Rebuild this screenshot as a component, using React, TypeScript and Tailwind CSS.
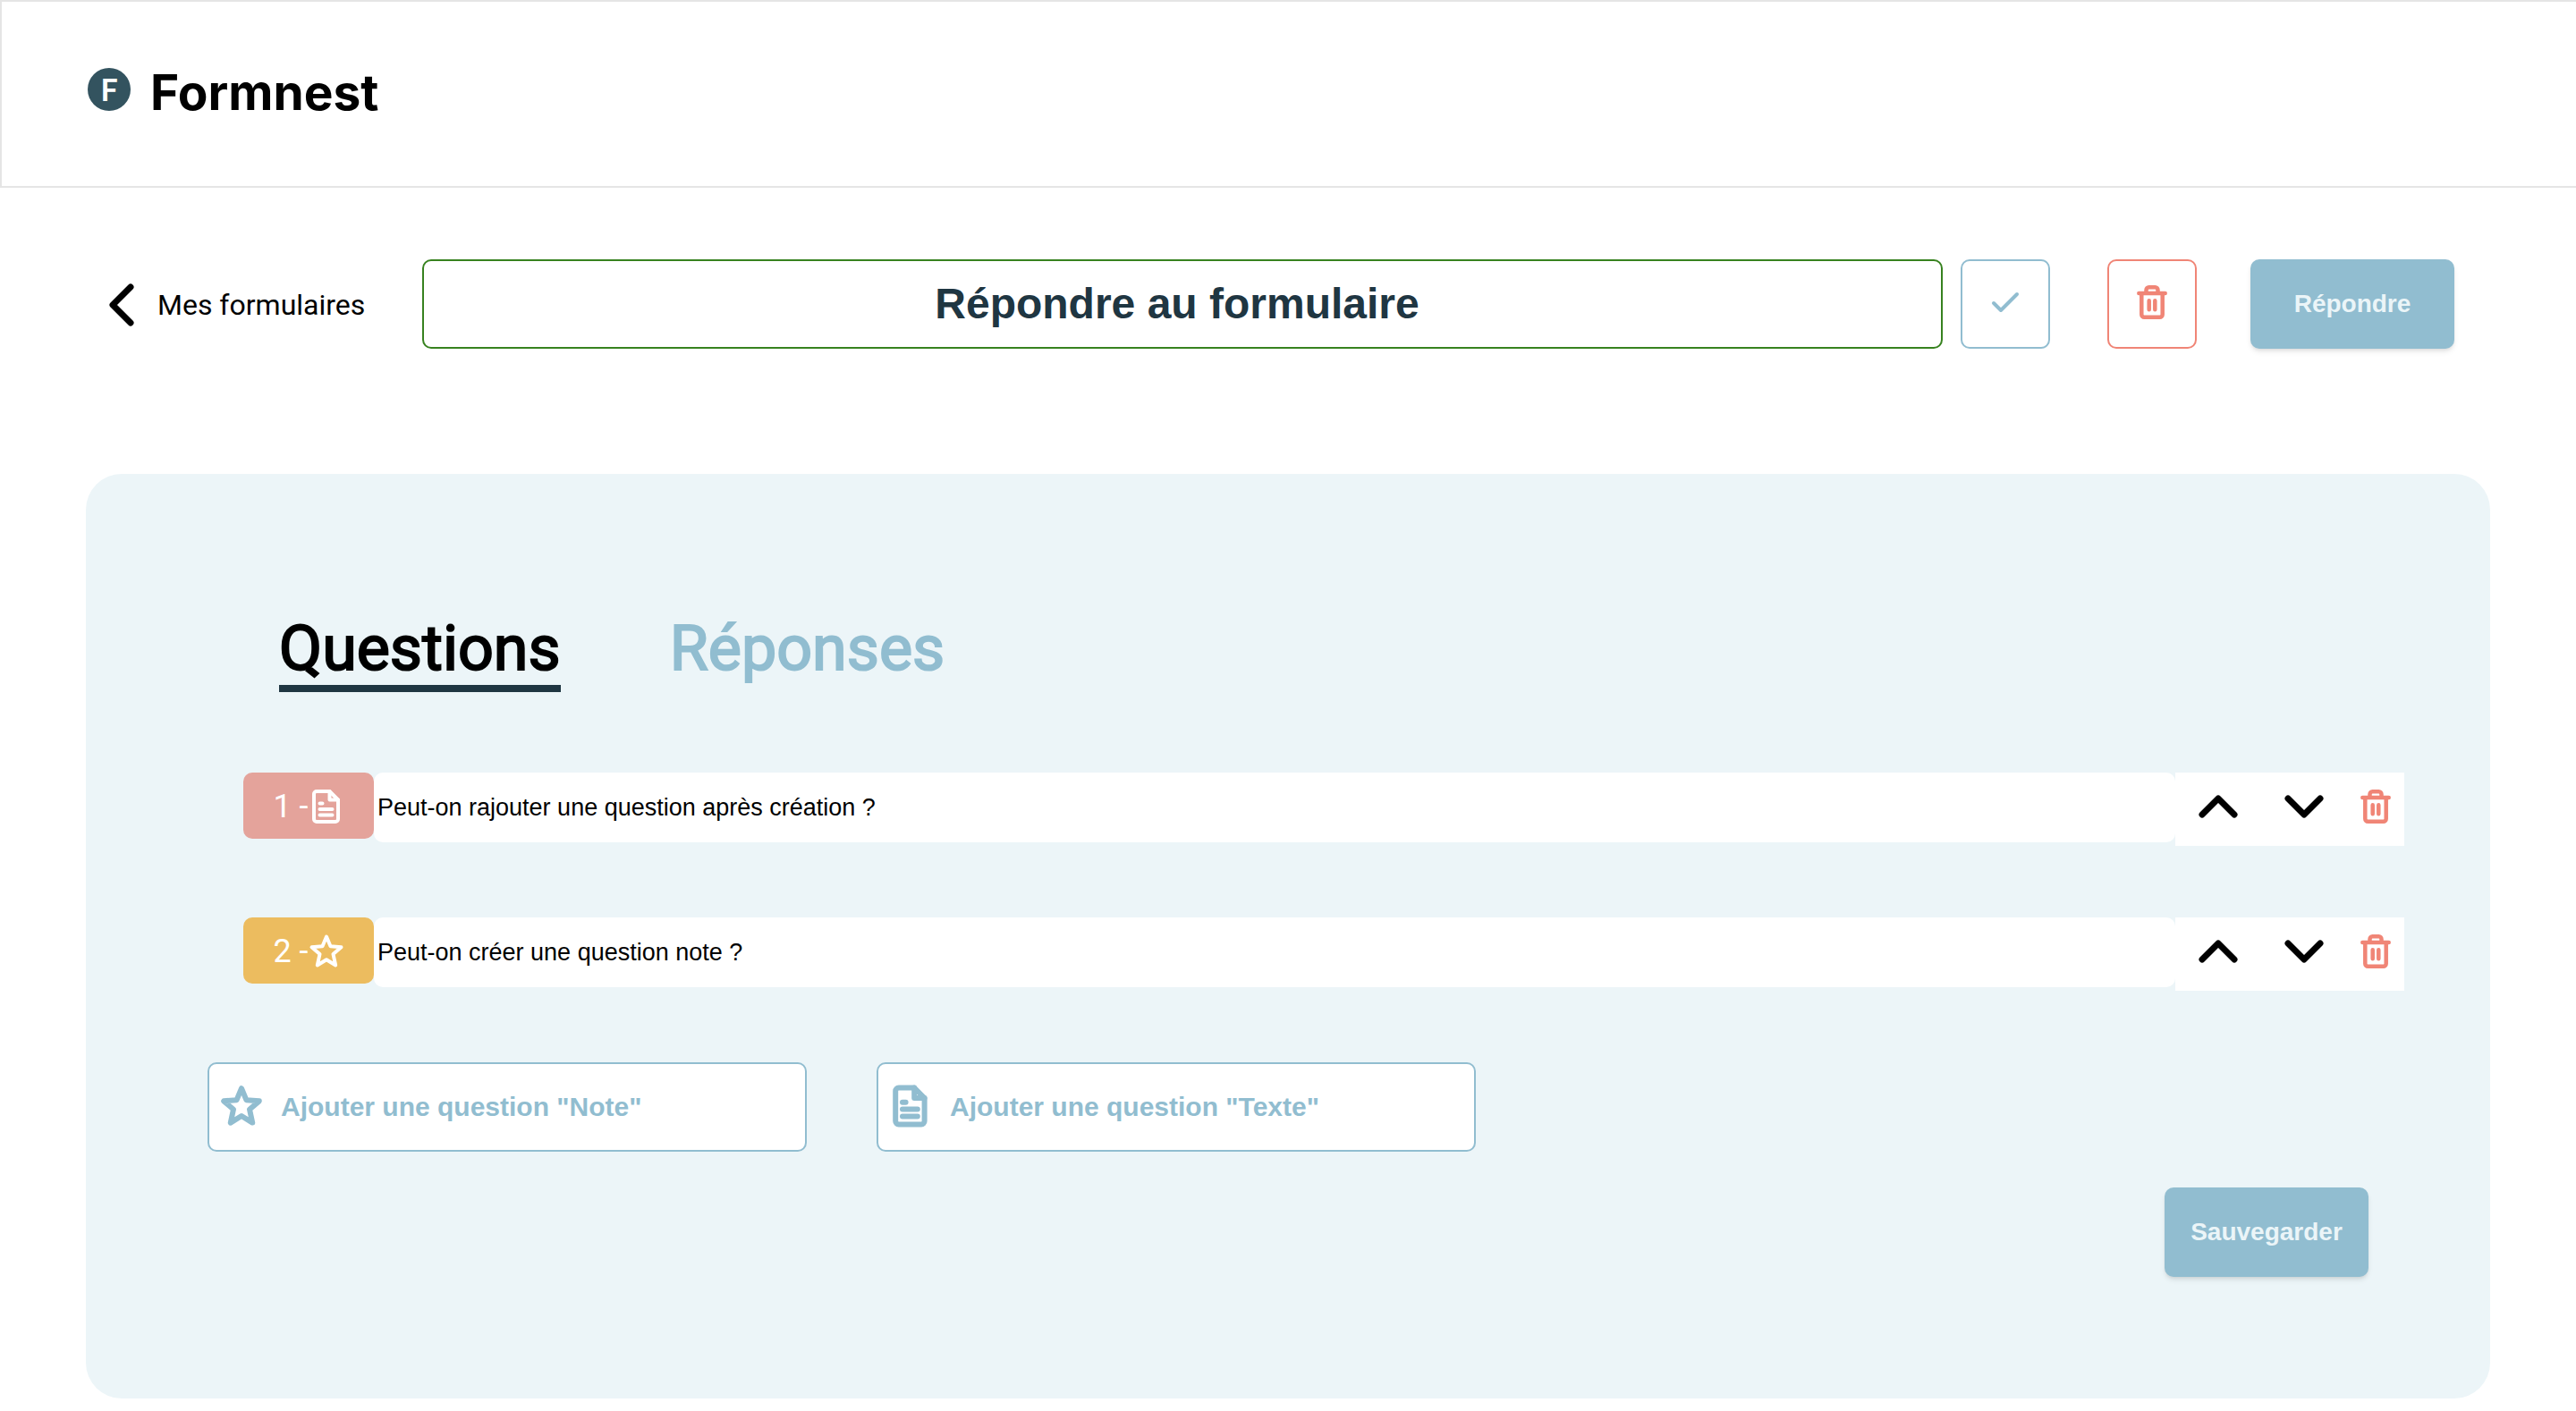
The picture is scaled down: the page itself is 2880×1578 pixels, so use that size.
import { useState } from 'react';

type Kind = 'text' | 'note';

const icon = 'shrink-0 fill-none [stroke-linecap:round] [stroke-linejoin:round]';

function DocIcon({ className }: { className: string }) {
  return (
    <svg viewBox="4 4 40 40" aria-hidden="true" className={`${icon} ${className}`} stroke="currentColor">
      <path d="M27.500 7H13a3 3 0 0 0-3 3v28a3 3 0 0 0 3 3h21a3 3 0 0 0 3-3V16.500z" />
      <path d="M27.500 7v9.500h9.500M16.500 20.500h3M16.500 27h14M16.500 33.500h14" />
    </svg>
  );
}

function StarIcon({ className }: { className: string }) {
  return (
    <svg viewBox="4 4 40 40" aria-hidden="true" className={`${icon} ${className}`} stroke="currentColor">
      <path d="M24 7.500l4.500 10.800 12 1-9 7.800L34.200 39.500 24 33.200 13.800 39.500l2.700-12.400-9-7.800 12-1z" />
    </svg>
  );
}

function TrashIcon() {
  return (
    <svg viewBox="0 0 34 38" aria-hidden="true" className={`${icon} h-[38px] w-[34px]`} stroke="currentColor" strokeWidth="4.5">
      <path d="M2.300 9h29.400M5.300 9v23.700a3 3 0 0 0 3 3h17.400a3 3 0 0 0 3-3V9M10.500 9V5.300a3 3 0 0 1 3-3h7a3 3 0 0 1 3 3v3.700M13.700 17.300v10M20.300 17.300v10" />
    </svg>
  );
}

function Chevron({ d }: { d: string }) {
  return (
    <svg viewBox="0 0 48 48" aria-hidden="true" className={`${icon} size-12`} stroke="currentColor" strokeWidth="7">
      <path d={d} />
    </svg>
  );
}

function QuestionRow({ index, kind, label }: { index: number; kind: Kind; label: string }) {
  const [value, setValue] = useState(label);
  return (
    <li className="flex items-start">
      <div
        className={`flex h-[74px] w-[146px] items-center justify-center rounded-[10px] pt-0.5 font-[Roboto] text-4xl text-white ${
          kind === 'text' ? 'bg-[#e4a39b]' : 'bg-[#ecbc5f]'
        }`}
      >
        <span>{index} -</span>
        {kind === 'text' ? <DocIcon className="size-10 stroke-4" /> : <StarIcon className="size-10 stroke-4" />}
      </div>
      <input
        aria-label={`Question ${index}`}
        value={value}
        onChange={(e) => setValue(e.target.value)}
        className="h-[78px] min-w-0 flex-1 rounded-[10px] bg-white px-1 text-[27px] text-black"
      />
      <div className="flex h-[82px] w-64 items-start bg-white text-black">
        <button type="button" aria-label="Monter" className="flex h-[76px] w-24 items-center justify-center">
          <Chevron d="M6 33L24 15L42 33" />
        </button>
        <button type="button" aria-label="Descendre" className="flex h-[76px] w-24 items-center justify-center">
          <Chevron d="M6 15L24 33L42 15" />
        </button>
        <button type="button" aria-label="Supprimer la question" className="flex h-[76px] w-16 items-center justify-center text-[#f08576]">
          <TrashIcon />
        </button>
      </div>
    </li>
  );
}

const questions: { kind: Kind; label: string }[] = [
  { kind: 'text', label: 'Peut-on rajouter une question après création ?' },
  { kind: 'note', label: 'Peut-on créer une question note ?' },
];

export default function App() {
  const [title, setTitle] = useState('Répondre au formulaire');
  return (
    <div className="bg-white pb-3.5 font-['Liberation_Sans',sans-serif]">
      <header className="flex h-[210px] items-start border-2 border-r-0 border-[#e5e5e5] pt-[66px] pl-24">
        <a href="#" className="flex items-start gap-[22px]">
          <span className="mt-2 flex size-12 items-center justify-center rounded-full bg-[#33535f] font-[Lato] text-[34px] font-bold leading-none text-white">
            F
          </span>
          <span className="font-[Inter] text-[55px] font-bold leading-[70px] text-black">Formnest</span>
        </a>
      </header>

      <div className="flex items-center pt-20 pr-34 pl-28">
        <a href="#" className="flex w-90 items-center gap-4 pt-0.5 font-[Roboto] text-[32px] text-black">
          <Chevron d="M34 4L14 24L34 44" />
          Mes formulaires
        </a>
        <input
          aria-label="Titre du formulaire"
          value={title}
          onChange={(e) => setTitle(e.target.value)}
          className="h-25 min-w-0 flex-1 rounded-[10px] border-2 border-[#37821f] bg-white pr-3 pb-0.5 text-center text-5xl font-bold text-[#1f3642]"
        />
        <button type="button" aria-label="Valider" className="ml-5 flex size-25 items-center justify-center rounded-[10px] border-2 border-[#91bdd0] pb-1 text-[#91bdd0]">
          <svg viewBox="0 0 32 24" aria-hidden="true" className={`${icon} h-6 w-8`} stroke="currentColor" strokeWidth="4">
            <path d="M3 13l8 8L29 3" />
          </svg>
        </button>
        <button type="button" aria-label="Supprimer le formulaire" className="ml-16 flex size-25 items-center justify-center rounded-[10px] border-2 border-[#f08576] pb-1 text-[#f08576]">
          <TrashIcon />
        </button>
        <button type="button" className="ml-15 h-25 w-57 rounded-[10px] bg-[#91bdd0] text-[28px] font-bold text-[#ebf5f8] shadow-md">
          Répondre
        </button>
      </div>

      <main className="mx-24 mt-35 rounded-[40px] bg-[#ecf5f8] pt-[154px] pb-34">
        <div role="tablist" className="flex items-start gap-[122px] pl-54 font-[Roboto] text-[70px] leading-[82px] [-webkit-text-stroke:2px_currentColor]">
          <button type="button" role="tab" aria-selected="true" className="border-b-8 border-[#1f3642] text-black">
            Questions
          </button>
          <button type="button" role="tab" aria-selected="false" className="text-[#91bdd0]">
            Réponses
          </button>
        </div>

        <ul className="mt-[90px] flex flex-col gap-20 pr-24 pl-44">
          {questions.map((q, i) => (
            <QuestionRow key={q.label} index={i + 1} kind={q.kind} label={q.label} />
          ))}
        </ul>

        <div className="mt-20 flex gap-[78px] pl-34 text-[30px] font-bold text-[#91bdd0]">
          <button type="button" className="flex h-25 w-[670px] items-center gap-5 rounded-[10px] border-2 border-[#91bdd0] bg-white px-3 pb-0.5">
            <StarIcon className="size-12 stroke-5" />
            Ajouter une question "Note"
          </button>
          <button type="button" className="flex h-25 w-[670px] items-center gap-5 rounded-[10px] border-2 border-[#91bdd0] bg-white px-3 pb-0.5">
            <DocIcon className="size-12 stroke-5" />
            Ajouter une question "Texte"
          </button>
        </div>

        <div className="mt-10 flex justify-end pr-34">
          <button type="button" className="h-25 w-57 rounded-[10px] bg-[#91bdd0] text-[28px] font-bold text-[#ebf5f8] shadow-md">
            Sauvegarder
          </button>
        </div>
      </main>
    </div>
  );
}
